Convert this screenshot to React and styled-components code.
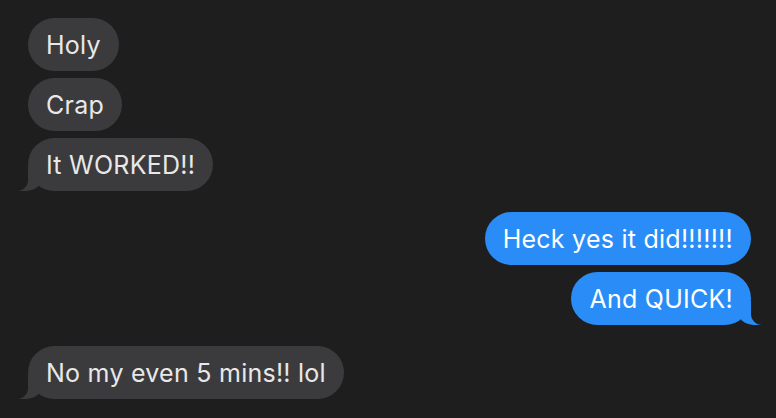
import React from "react";
import styled, { createGlobalStyle, css } from "styled-components";

const PAGE_BG = "#1e1e1e";

const GlobalStyle = createGlobalStyle`
  html, body {
    margin: 0;
    padding: 0;
    background: ${PAGE_BG};
  }
  body {
    font-family: Inter, "Liberation Sans", Arial, sans-serif;
    -webkit-font-smoothing: antialiased;
  }
`;

const Thread = styled.div`
  display: flex;
  flex-direction: column;
  padding: 18px 25px 0 28px;
  height: 418px;
  box-sizing: border-box;
`;

const Group = styled.div`
  display: flex;
  flex-direction: column;
  align-items: ${(p) => (p.$sent ? "flex-end" : "flex-start")};
  gap: 7px;
  margin-bottom: 21px;
`;

const Bubble = styled.div`
  position: relative;
  box-sizing: border-box;
  height: 53px;
  display: flex;
  align-items: center;
  padding: 0 18px;
  border-radius: 27px;
  font-size: 25px;
  letter-spacing: 0.25px;
  line-height: 30px;
  white-space: nowrap;
  background: ${(p) => (p.$sent ? "#2a8cf7" : "#3b3b3d")};
  color: ${(p) => (p.$sent ? "#ffffff" : "#e8e8e8")};

  ${(p) =>
    p.$tail &&
    (p.$sent
      ? css`
          &::before {
            content: "";
            position: absolute;
            bottom: 0;
            right: -10px;
            width: 24px;
            height: 24px;
            background: #2a8cf7;
            border-bottom-left-radius: 17px 15px;
          }
          &::after {
            content: "";
            position: absolute;
            bottom: 0;
            right: -14px;
            width: 14px;
            height: 26px;
            background: ${PAGE_BG};
            border-bottom-left-radius: 11px;
          }
        `
      : css`
          &::before {
            content: "";
            position: absolute;
            bottom: 0;
            left: -9px;
            width: 24px;
            height: 24px;
            background: #3b3b3d;
            border-bottom-right-radius: 17px 15px;
          }
          &::after {
            content: "";
            position: absolute;
            bottom: 0;
            left: -13px;
            width: 13px;
            height: 26px;
            background: ${PAGE_BG};
            border-bottom-right-radius: 11px;
          }
        `)}
`;

const conversation = [
  { sent: false, lines: ["Holy", "Crap", "It WORKED!!"] },
  { sent: true, lines: ["Heck yes it did!!!!!!!", "And QUICK!"] },
  { sent: false, lines: ["No my even 5 mins!! lol"] },
];

export default function App() {
  return (
    <>
      <GlobalStyle />
      <Thread>
        {conversation.map((g, gi) => (
          <Group key={gi} $sent={g.sent}>
            {g.lines.map((line, i) => (
              <Bubble key={i} $sent={g.sent} $tail={i === g.lines.length - 1}>
                {line}
              </Bubble>
            ))}
          </Group>
        ))}
      </Thread>
    </>
  );
}
